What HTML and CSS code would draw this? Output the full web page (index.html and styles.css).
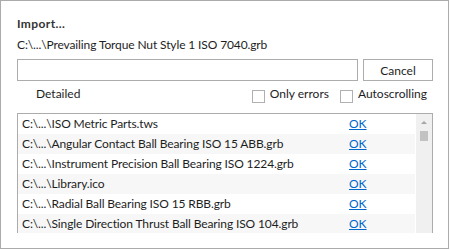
FILE: index.html
```html
<!DOCTYPE html>
<html lang="en">
<head>
    <meta charset="UTF-8">
    <title>Import</title>
    <link rel="stylesheet" href="styles.css">
</head>
<body>
    <div class="dialog">
        <div class="title">Import...</div>
        <div class="path">C:\...\Prevailing Torque Nut Style 1 ISO 7040.grb</div>
        <div class="progress-row">
            <div class="progress"></div>
            <button class="btn">Cancel</button>
        </div>
        <div class="options-row">
            <span class="detailed">Detailed</span>
            <label class="check first"><span class="box"></span>Only errors</label>
            <label class="check"><span class="box"></span>Autoscrolling</label>
        </div>
        <div class="log">
            <div class="rows">
                <div class="row"><span class="name">C:\...\ISO Metric Parts.tws</span><a class="status" href="#">OK</a></div>
                <div class="row"><span class="name">C:\...\Angular Contact Ball Bearing ISO 15 ABB.grb</span><a class="status" href="#">OK</a></div>
                <div class="row"><span class="name">C:\...\Instrument Precision Ball Bearing ISO 1224.grb</span><a class="status" href="#">OK</a></div>
                <div class="row"><span class="name">C:\...\Library.ico</span><a class="status" href="#">OK</a></div>
                <div class="row"><span class="name">C:\...\Radial Ball Bearing ISO 15 RBB.grb</span><a class="status" href="#">OK</a></div>
                <div class="row"><span class="name">C:\...\Single Direction Thrust Ball Bearing ISO 104.grb</span><a class="status" href="#">OK</a></div>
            </div>
            <div class="scrollbar">
                <div class="arrow"></div>
                <div class="thumb"></div>
            </div>
        </div>
    </div>
</body>
</html>
```

FILE: styles.css
```css
body {
    margin: 0;
    background: #fff;
    font-family: Lato, "Liberation Sans", sans-serif;
    font-size: 12px;
    color: #1e1e1e;
}
.dialog {
    width: 449px;
    height: 249px;
    box-sizing: border-box;
    border: 1px solid #ababab;
    padding: 15px 15px 0 16px;
    background: #fff;
}
.title {
    font-weight: bold;
    line-height: 16px;
    letter-spacing: 0.4px;
    color: #333;
}
.path {
    margin-top: 5px;
    line-height: 16px;
    letter-spacing: -0.12px;
}
.progress-row {
    display: flex;
    gap: 5px;
    margin-top: 6px;
    height: 22px;
}
.progress {
    flex: 1;
    border: 1px solid #acacac;
    background: #fff;
}
.btn {
    width: 70px;
    height: 22px;
    border: 1px solid #adadad;
    background: #fff;
    font: inherit;
    color: #1e1e1e;
    padding: 0;
}
.options-row {
    display: flex;
    align-items: flex-start;
    height: 32px;
    padding-right: 6px;
}
.detailed {
    margin: 5px 0 0 19px;
    line-height: 16px;
}
.check {
    display: flex;
    align-items: flex-start;
    gap: 5px;
    margin-top: 5px;
    margin-left: 11px;
    line-height: 16px;
}
.check.first {
    margin-left: auto;
}
.box {
    width: 13px;
    height: 13px;
    box-sizing: border-box;
    border: 1px solid #b0b0b0;
    background: #fff;
    margin-top: 4px;
}
.log {
    display: flex;
    height: 120px;
    box-sizing: border-box;
    border: 1px solid #acacac;
    border-bottom: none;
    overflow: hidden;
}
.rows {
    flex: 1;
    padding-right: 1px;
}
.row {
    display: grid;
    grid-template-columns: 331px 1fr;
    height: 20px;
    line-height: 20px;
    white-space: nowrap;
}
.row:nth-child(even) {
    background: #f7f7f7;
}
.name {
    padding-left: 4px;
    overflow: hidden;
    letter-spacing: -0.12px;
}
.status {
    color: #0066cc;
    text-decoration: underline;
}
.scrollbar {
    width: 16px;
    background: #f0f0f0;
    position: relative;
}
.arrow {
    position: absolute;
    top: 7px;
    left: 5px;
    width: 0;
    height: 0;
    border-left: 3px solid transparent;
    border-right: 3px solid transparent;
    border-bottom: 3px solid #a6a6a6;
}
.thumb {
    position: absolute;
    top: 17px;
    left: 4px;
    width: 8px;
    height: 10px;
    background: #c2c2c2;
}
```
